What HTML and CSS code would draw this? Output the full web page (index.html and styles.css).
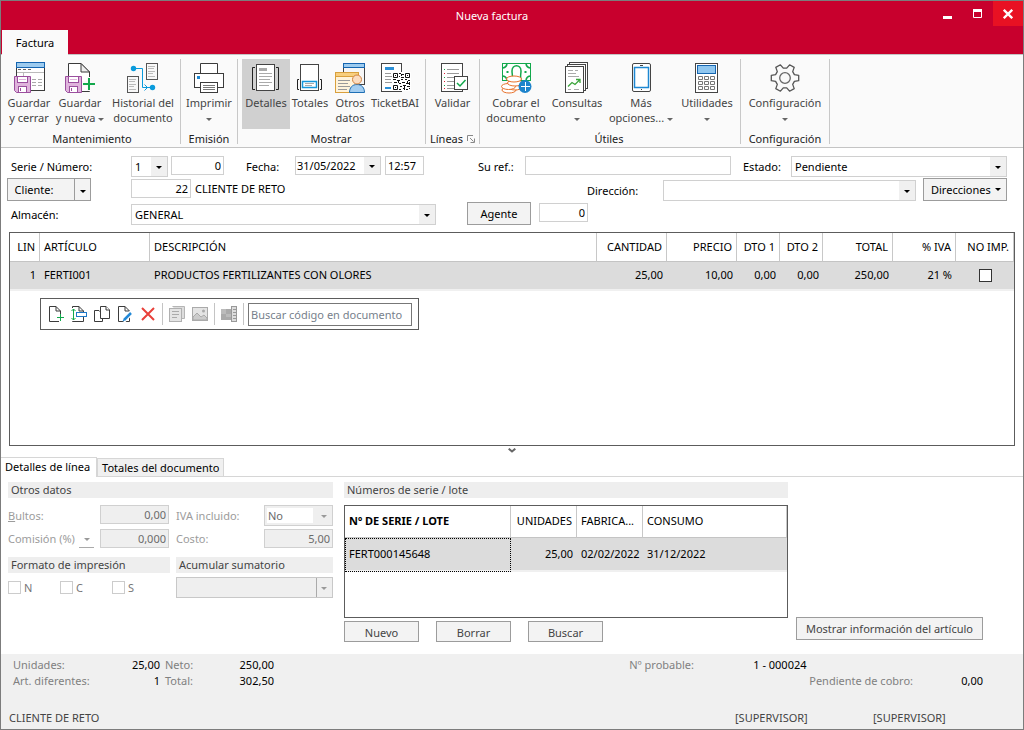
FILE: index.html
```html
<!DOCTYPE html>
<html lang="es">
<head>
<meta charset="utf-8">
<title>Nueva factura</title>
<link rel="stylesheet" href="styles.css">
</head>
<body>
<svg class="defs" aria-hidden="true">
  <defs>
    <g id="floppy">
      <path d="M1.500 14.500H17.500V30.500H3.500L1.500 28.500Z" fill="#dfb4dc" stroke="#9b4f9e"/>
      <rect x="4.500" y="14.500" width="10" height="6" fill="#fff" stroke="#9b4f9e"/>
      <path d="M6 17.500H13" stroke="#dfb4dc"/>
      <rect x="5.500" y="24.500" width="8" height="6" fill="#fff" stroke="#9b4f9e"/>
      <path d="M7.500 26V29" stroke="#9b4f9e"/>
    </g>
    <g id="sheet">
      <path d="M1.500 .5H8L12.500 5V15.500H1.500Z" fill="#fff" stroke="#3b3b3b"/>
      <path d="M8 .5V5H12.500" fill="none" stroke="#3b3b3b"/>
    </g>
  </defs>
</svg>
<div class="window">
  <header class="titlebar">
    <h1 class="title">Nueva factura</h1>
    <div class="caption">
      <button class="cap" aria-label="Minimizar"><svg width="10" height="10" viewBox="0 0 10 10"><path d="M0 8.500H9" stroke="#fff" stroke-width="3"/></svg></button>
      <button class="cap" aria-label="Maximizar"><svg width="10" height="10" viewBox="0 0 10 10"><path d="M.5 .5H8.500V8.500H.5ZM0 2H9" fill="none" stroke="#fff"/><path d="M0 1.500H9" stroke="#fff" stroke-width="3"/></svg></button>
      <button class="cap close" aria-label="Cerrar"><svg width="10" height="10" viewBox="0 0 10 10"><path d="M.8 .8L9.200 9.200M9.200 .8L.8 9.200" stroke="#fff" stroke-width="2.300"/></svg></button>
    </div>
  </header>
  <nav class="ribbon-tabs"><button class="ribbon-tab">Factura</button></nav>

  <div class="ribbon">
    <section class="group">
      <div class="tools">
        <button class="tool w50">
          <svg class="ico" viewBox="0 0 32 32"><rect x="3.500" y=".5" width="28" height="28" fill="#fff" stroke="#3b3b3b"/><rect x="3.500" y=".5" width="28" height="5" fill="#9dcbef" stroke="#1565b0"/><path d="M5 7.500H8M10 7.500H13M15 7.500H18" stroke="#666"/><path d="M4 10.500H31M10.500 10V14" stroke="#bbb"/><path d="M19 17.500H23M25 17.500H29M19 20.500H23M25 20.500H29M19 23.500H23M25 23.500H29" stroke="#aaa"/><use href="#floppy"/></svg>
          <span>Guardar<br>y cerrar</span></button>
        <button class="tool w52">
          <svg class="ico" viewBox="0 0 32 32"><path d="M4.500 1.500H17L25.500 10V29.500H4.500Z" fill="#fff" stroke="#3b3b3b"/><path d="M17 1.500V10H25.500Z" fill="#eee" stroke="#3b3b3b"/><use href="#floppy"/><path d="M25.500 15V29M18 21.500H32" stroke="#fafafa" stroke-width="5"/><path d="M25 16V28M19 22H31" stroke="#12a84c" stroke-width="2"/></svg>
          <span>Guardar<br>y nueva <i class="arr"></i></span></button>
        <button class="tool w74">
          <svg class="ico" viewBox="0 0 32 32"><rect x="19.500" y="1.500" width="11" height="16" fill="#f8f8f8" stroke="#555"/><path d="M21 4.500H28M21 6.500H27M21 9.500H28M21 11.500H26M21 14.500H28" stroke="#bbb"/><rect x=".5" y="14.500" width="11" height="16" fill="#f8f8f8" stroke="#555"/><path d="M2 17.500H9M2 19.500H8M2 22.500H9M2 24.500H7M2 27.500H9" stroke="#bbb"/><path d="M6 6.500H15.500V25.500H25M17.500 22.500L20.500 25.500L17.500 28.500" fill="none" stroke="#0a9bdc"/><circle cx="6.500" cy="6.500" r="2.700" fill="#0a9bdc"/><circle cx="25.500" cy="25.500" r="2.700" fill="#0a9bdc"/></svg>
          <span>Historial del<br>documento</span></button>
      </div>
      <h2 class="group-name">Mantenimiento</h2>
    </section>
    <section class="group">
      <div class="tools">
        <button class="tool w56">
          <svg class="ico" viewBox="0 0 32 32"><g fill="#fff" stroke="#3b3b3b"><path d="M7.500 11V1.500H24.500V11"/><rect x="1.500" y="11.500" width="29" height="14"/><rect x="7.500" y="20.500" width="17" height="10"/></g><rect x="4" y="14" width="3" height="3" fill="#1e88d2"/><path d="M10 23.500H22M10 25.500H22M10 27.500H22" stroke="#777"/></svg>
          <span>Imprimir<br><i class="arr"></i></span></button>
      </div>
      <h2 class="group-name">Emisión</h2>
    </section>
    <section class="group wide">
      <div class="tools">
        <button class="tool w48 on">
          <svg class="ico" viewBox="0 0 32 32"><path d="M5 5.500H2.500V27.500H5M26 5.500H28.500V27.500H26" fill="none" stroke="#222"/><rect x="6.500" y="2.500" width="18" height="26" fill="#fff" stroke="#444"/><rect x="9" y="6" width="8" height="3" fill="#aaa"/><path d="M9 11.500H22M9 14.500H22M9 17.500H20M9 20.500H22M9 23.500H19" stroke="#aaa"/></svg>
          <span>Detalles</span></button>
        <button class="tool w40">
          <svg class="ico" viewBox="0 0 32 32"><path d="M5 17.500H3.500V27.500H5M26 17.500H27.500V27.500H26" fill="none" stroke="#222"/><rect x="6.500" y="2.500" width="18" height="26" fill="#fff" stroke="#444"/><rect x="8.500" y="19.500" width="14" height="6" fill="#fff" stroke="#1597dc" stroke-width="1.500"/><path d="M11 21.500H20M11 23.500H18" stroke="#aaa"/></svg>
          <span>Totales</span></button>
        <button class="tool w40">
          <svg class="ico" viewBox="0 0 32 32"><rect x="9.500" y="1.500" width="21" height="21" fill="#f6f6f6" stroke="#444"/><rect x="9.500" y="1.500" width="21" height="4" fill="#9dcbef" stroke="#1565b0"/><rect x="1.500" y="10.500" width="23" height="20" fill="#fff3da" stroke="#d9a03c"/><rect x="1.500" y="10.500" width="23" height="4" fill="#f8cf7e" stroke="#d9a03c"/><path d="M4 18.500H16M4 21.500H14M4 24.500H16M4 27.500H13" stroke="#999"/><path d="M15.500 30.500C15.500 26 18 22.500 23 22.500S30.500 26 30.500 30.500Z" fill="#a3cdf0" stroke="#1e6fb5"/><circle cx="23" cy="17.500" r="4.500" fill="#fbdcbf" stroke="#cf8240"/></svg>
          <span>Otros<br>datos</span></button>
        <button class="tool w50">
          <svg class="ico" viewBox="0 0 32 32"><rect x="2.500" y="1.500" width="20" height="28" fill="#fff" stroke="#444"/><rect x="6" y="5" width="9" height="3" fill="#2b8fd6"/><path d="M6 11.500H12M6 14.500H13M6 17.500H12M6 20.500H13" stroke="#999"/><path d="M6 26H12" stroke="#2b8fd6" stroke-width="2"/><rect x="13" y="10" width="19" height="19" fill="#fff"/><g fill="none" stroke="#111"><path d="M14.500 11.500H18.500V15.500H14.500ZM26.500 11.500H30.500V15.500H26.500ZM14.500 23.500H18.500V27.500H14.500Z"/><path d="M16 13.500H17M28 13.500H29M16 25.500H17M20 11.500H22M23 12.500H25M20 14.500H21M22 15.500H25M14 17.500H17M18 18.500H21M22 17.500H24M26 17.500H28M29 18.500H31M15 20.500H18M20 21.500H22M23 20.500H26M27 21.500H30M21 24.500H23M24 23.500H27M28 24.500H31M20 27.500H22M24 26.500H26M27 27.500H29M30 26.500H31M22.500 12V14M19.500 19V21M25.500 24V28M28.500 19V21M30.500 20V23"/></g></svg>
          <span>TicketBAI</span></button>
      </div>
      <h2 class="group-name">Mostrar</h2>
    </section>
    <section class="group">
      <div class="tools">
        <button class="tool w53">
          <svg class="ico" viewBox="0 0 32 32"><rect x="4.500" y="1.500" width="21" height="28" fill="#fff" stroke="#444"/><path d="M10 7.500H22M10 11.500H22M10 15.500H17M10 19.500H17M10 23.500H17M10 26.500H20" stroke="#999"/><path d="M7.500 7V8M7.500 15V16M7.500 23V24" stroke="#12a84c"/><path d="M7.500 11V12M7.500 19V20M7.500 26V27" stroke="#d23"/><rect x="17.500" y="14.500" width="13" height="13" fill="#fff" stroke="#444"/><path d="M20 21L23 24L28.500 18" fill="none" stroke="#12a84c" stroke-width="1.500"/></svg>
          <span>Validar</span></button>
      </div>
      <div class="group-foot"><h2 class="group-name">Líneas</h2><button class="launcher" aria-label="Opciones de líneas"><svg width="8" height="8" viewBox="0 0 8 8"><path d="M.5 6V.5H6M3 3L6.500 6.500M3.500 7.500H7.500V3.500" fill="none" stroke="#888"/></svg></button></div>
    </section>
    <section class="group pad2">
      <div class="tools">
        <button class="tool w68">
          <svg class="ico" viewBox="0 0 32 32"><rect x="2.500" y="1.500" width="28" height="17" fill="#fff" stroke="#12a84c"/><path d="M3 6A5 5 0 0 0 7 2M26 2A5 5 0 0 0 30 6M3 14A5 5 0 0 1 7 18M26 18A5 5 0 0 1 30 14M12 18C13 14 12 12 12 9C12 2 21 2 21 9C21 12 20 14 21 18" fill="none" stroke="#12a84c" stroke-width="1.500"/><path d="M7.500 9V11M25.500 9V11" stroke="#12a84c" stroke-width="2"/><g fill="#fff" stroke="#e8722c"><ellipse cx="9" cy="28" rx="7" ry="3"/><ellipse cx="15" cy="25" rx="7" ry="3"/><ellipse cx="8.500" cy="24.500" rx="7" ry="3"/><ellipse cx="15" cy="21" rx="7.500" ry="3"/><ellipse cx="14" cy="17" rx="7.500" ry="3"/></g><circle cx="25" cy="24.500" r="6.500" fill="#1e84cc"/><path d="M25.500 20V29M21 24.500H30" stroke="#fff"/></svg>
          <span>Cobrar el<br>documento</span></button>
        <button class="tool w54">
          <svg class="ico" viewBox="0 0 32 32"><g fill="#fff" stroke="#444"><rect x="8.500" y=".5" width="18" height="26"/><rect x="6.500" y="2.500" width="18" height="26"/><rect x="4.500" y="4.500" width="18" height="26"/></g><path d="M7 8.500H12M14 8.500H17M7 11.500H15M7 14.500H18M7 27.500H10M13 27.500H18" stroke="#aaa"/><path d="M7 24.500L11 20.500L14 22.500L18.500 18M15 17.500H19V21" fill="none" stroke="#3ba53b" stroke-width="1.300"/></svg>
          <span>Consultas<br><i class="arr"></i></span></button>
        <button class="tool w74">
          <svg class="ico" viewBox="0 0 32 32"><rect x="7.500" y="1.500" width="18" height="28" rx="1.500" fill="#fff" stroke="#444"/><rect x="9.500" y="5.500" width="14" height="20" fill="#fff" stroke="#1e88d2" stroke-width="1.500"/><path d="M15 3.500H18M16 27.500H17" stroke="#444"/></svg>
          <span>Más<br>opciones... <i class="arr"></i></span></button>
        <button class="tool w58">
          <svg class="ico" viewBox="0 0 32 32"><rect x="4.500" y="1.500" width="22" height="29" fill="#fff" stroke="#444"/><rect x="6.500" y="3.500" width="18" height="8" fill="#8fc6ef" stroke="#1565b0"/><path d="M7.500 14.500h4v3h-4zM13.500 14.500h4v3h-4zM19.500 14.500h4v3h-4zM7.500 19.500h4v3h-4zM13.500 19.500h4v3h-4zM19.500 19.500h4v3h-4zM7.500 24.500h4v3h-4zM13.500 24.500h4v3h-4zM19.500 24.500h4v3h-4z" fill="#fff" stroke="#777"/></svg>
          <span>Utilidades<br><i class="arr"></i></span></button>
      </div>
      <h2 class="group-name">Útiles</h2>
    </section>
    <section class="group">
      <div class="tools">
        <button class="tool w88">
          <svg class="ico" viewBox="0 0 32 32"><path d="M25.400 12.600L29.700 13.300V18.700L25.400 19.400L23.700 22.400L25.200 26.600L20.600 29.200L17.700 25.800H14.300L11.400 29.200L6.800 26.600L8.300 22.400L6.600 19.400L2.300 18.700V13.300L6.600 12.600L8.300 9.600L6.800 5.400L11.400 2.800L14.300 6.200H17.700L20.600 2.800L25.200 5.400L23.700 9.600Z" fill="#fafafa" stroke="#555" stroke-width="1.300" stroke-linejoin="round"/><circle cx="16" cy="16" r="5.300" fill="#fafafa" stroke="#666" stroke-width="1.300"/></svg>
          <span>Configuración<br><i class="arr"></i></span></button>
      </div>
      <h2 class="group-name">Configuración</h2>
    </section>
  </div>

  <main class="body">
    <form class="head-form">
      <div class="frow">
        <label class="lbl w120" for="serie">Serie / Número:</label>
        <div class="combo w37"><select id="serie"><option>1</option></select></div>
        <input class="box w53 num gap3" aria-label="Número" value="0">
        <label class="lbl w49 gap22" for="fecha">Fecha:</label>
        <div class="combo w86 short"><select id="fecha"><option>31/05/2022</option></select></div>
        <input class="box w39 gap4" aria-label="Hora" value="12:57">
        <label class="lbl w47 gap54" for="ref">Su ref.:</label>
        <input class="box w206" id="ref">
        <label class="lbl w48 gap12" for="estado">Estado:</label>
        <div class="combo grow"><select id="estado"><option>Pendiente</option></select></div>
      </div>
      <div class="frow tall">
        <div class="split"><button type="button" class="btn main">Cliente:</button><button type="button" class="btn drop" aria-label="Más opciones de cliente"><i class="arr dark"></i></button></div>
        <input class="box w60 num" aria-label="Cliente" value="22">
        <span class="client grow">CLIENTE DE RETO</span>
        <label class="lbl w76" for="dir">Dirección:</label>
        <div class="combo w253"><select id="dir"><option></option></select></div>
        <button type="button" class="btn w84 gap7 dirs">Direcciones<i class="arr dark"></i></button>
      </div>
      <div class="frow tall">
        <label class="lbl w120" for="almacen">Almacén:</label>
        <div class="combo w305"><select id="almacen"><option>GENERAL</option></select></div>
        <button type="button" class="btn w64 gap31">Agente</button>
        <input class="box w49 num gap8" aria-label="Agente" value="0">
      </div>
    </form>

    <div class="lines">
      <table class="grid">
        <colgroup><col class="w30"><col class="w110"><col><col class="w70"><col class="w70"><col class="w43"><col class="w43"><col class="w70"><col class="w63"><col class="w58"></colgroup>
        <thead><tr><th class="r">LIN</th><th>ARTÍCULO</th><th>DESCRIPCIÓN</th><th class="r">CANTIDAD</th><th class="r">PRECIO</th><th class="r">DTO 1</th><th class="r">DTO 2</th><th class="r">TOTAL</th><th class="r">% IVA</th><th class="r">NO IMP.</th></tr></thead>
        <tbody><tr><td class="r">1</td><td>FERTI001</td><td>PRODUCTOS FERTILIZANTES CON OLORES</td><td class="r">25,00</td><td class="r">10,00</td><td class="r">0,00</td><td class="r">0,00</td><td class="r">250,00</td><td class="r">21 %</td><td class="c"><input type="checkbox" class="tick strong" aria-label="No imprimir"></td></tr></tbody>
      </table>
      <div class="minibar">
        <button class="mini" aria-label="Nueva línea"><svg viewBox="0 0 16 16"><use href="#sheet"/><path d="M8 11.500H16M12.500 8V16" stroke="#fff" stroke-width="3"/><path d="M9 11.500H16M12.500 8V15" stroke="#12a84c"/></svg></button>
        <button class="mini" aria-label="Insertar línea"><svg viewBox="0 0 16 16"><use href="#sheet"/><path d="M2.500 2V15" stroke="#fff" stroke-width="4"/><path d="M2.500 3V14M.5 5L2.500 3L4.500 5M.5 12L2.500 14L4.500 12" fill="none" stroke="#12a84c"/><rect x="5.500" y="6.500" width="10" height="4" fill="#fff" stroke="#1e78c8"/></svg></button>
        <button class="mini" aria-label="Duplicar línea"><svg viewBox="0 0 16 16"><g fill="#fff" stroke="#3b3b3b"><path d="M.5 4.500H5L8.500 8V15.500H.5Z"/><path d="M6.500 .5H12L15.500 4V12.500H6.500Z"/><path d="M12 .5V4H15.500"/></g></svg></button>
        <button class="mini" aria-label="Editar línea"><svg viewBox="0 0 16 16"><use href="#sheet"/><path d="M6 15L15 6" stroke="#fff" stroke-width="5"/><path d="M7.500 13.500L14 7" stroke="#2389d7" stroke-width="2.500"/><path d="M5.500 15.500L7 12L9 14Z" fill="#2389d7"/></svg></button>
        <button class="mini" aria-label="Eliminar línea"><svg viewBox="0 0 16 16"><path d="M2 2L14 14M14 2L2 14" stroke="#e8403a" stroke-width="2"/></svg></button>
        <span class="sep"></span>
        <button class="mini" aria-label="Documentos" disabled><svg viewBox="0 0 16 16"><path d="M3.500 .5H15.500V12.500H13" fill="#ddd" stroke="#b5b5b5"/><rect x=".5" y="2.500" width="12" height="13" fill="#e4e4e4" stroke="#b0b0b0"/><path d="M3 5.500H10M3 8.500H10M3 11.500H8" stroke="#aaa"/></svg></button>
        <button class="mini" aria-label="Imagen" disabled><svg viewBox="0 0 16 16"><rect x=".5" y="1.500" width="15" height="13" fill="#e4e4e4" stroke="#aaa"/><path d="M1 11L5 7L9 11L12 9L15 12V14H1Z" fill="#ccc" stroke="#aaa"/><circle cx="11.500" cy="5" r="1.500" fill="#aaa"/></svg></button>
        <span class="sep"></span>
        <button class="mini" aria-label="Tallas" disabled><svg viewBox="0 0 16 16"><path d="M0 3H10V14H0Z" fill="#aaa"/><path d="M0 3H5V8H0ZM5 8H10V11H5Z" fill="#bbb"/><rect x="10.500" y=".5" width="5" height="15" fill="#ddd" stroke="#999"/><path d="M12 3.500H15M12 6.500H15M12 9.500H15M12 12.500H15" stroke="#999"/></svg></button>
        <span class="sep"></span>
        <input class="search" aria-label="Buscar código en documento" placeholder="Buscar código en documento">
      </div>
    </div>

    <button class="collapse" aria-label="Contraer panel"><svg width="8" height="5" viewBox="0 0 8 5"><path d="M.7 .7L4 3.500L7.300 .7" fill="none" stroke="#666" stroke-width="2"/></svg></button>

    <nav class="tabs"><button class="tab active">Detalles de línea</button><button class="tab">Totales del documento</button></nav>

    <div class="panel">
      <section class="left">
        <h3 class="bar">Otros datos</h3>
        <div class="pair first">
          <label class="off" for="bultos"><u>B</u>ultos:</label>
          <input class="box num dis" id="bultos" value="0,00" disabled>
          <label class="off" for="iva">IVA incluido:</label>
          <div class="combo dis"><select id="iva" disabled><option>No</option></select></div>
        </div>
        <div class="pair">
          <div class="com"><label class="off" for="comision">Comisión (%)</label><button class="unit" aria-label="Tipo de comisión" disabled><i class="arr"></i></button></div>
          <input class="box num dis" id="comision" value="0,000" disabled>
          <label class="off" for="costo">Costo:</label>
          <input class="box num dis" id="costo" value="5,00" disabled>
        </div>
        <div class="halves">
          <div>
            <h3 class="bar">Formato de impresión</h3>
            <div class="checks"><label><input type="checkbox" class="tick" disabled>N</label><label><input type="checkbox" class="tick" disabled>C</label><label><input type="checkbox" class="tick" disabled>S</label></div>
          </div>
          <div>
            <h3 class="bar">Acumular sumatorio</h3>
            <div class="combo dis sum"><select aria-label="Acumular sumatorio" disabled><option></option></select></div>
          </div>
        </div>
      </section>
      <section class="mid">
        <h3 class="bar">Números de serie / lote</h3>
        <div class="lots">
          <table class="grid lot">
            <colgroup><col class="w166"><col class="w66"><col class="w66"><col></colgroup>
            <thead><tr><th class="b">Nº DE SERIE / LOTE</th><th class="r">UNIDADES</th><th>FABRICA...</th><th>CONSUMO</th></tr></thead>
            <tbody><tr><td class="focus">FERT000145648</td><td class="r">25,00</td><td>02/02/2022</td><td>31/12/2022</td></tr></tbody>
          </table>
        </div>
        <div class="actions"><button class="btn grey">Nuevo</button><button class="btn grey">Borrar</button><button class="btn grey">Buscar</button></div>
      </section>
      <button class="btn grey info">Mostrar información del artículo</button>
    </div>
  </main>

  <footer class="status">
    <div class="sums">
      <dl class="totals">
        <dt>Unidades:</dt><dd>25,00</dd><dt>Neto:</dt><dd>250,00</dd>
        <dt>Art. diferentes:</dt><dd>1</dd><dt>Total:</dt><dd>302,50</dd>
      </dl>
      <dl class="due">
        <dt>Nº probable:</dt><dd class="number">1 - 000024</dd>
        <dt class="pending">Pendiente de cobro:</dt><dd class="amount">0,00</dd>
      </dl>
    </div>
    <div class="users"><span class="grow">CLIENTE DE RETO</span><span class="user">[SUPERVISOR]</span><span class="user">[SUPERVISOR]</span></div>
  </footer>
</div>
</body>
</html>
```

FILE: styles.css
```css
* { box-sizing: border-box; }
body { margin: 0; font: 11px/15px "Noto Sans", "Open Sans", sans-serif; color: #000; background: #fff; }
button, input, select { font: inherit; color: inherit; margin: 0; padding: 0; border-radius: 0; }
button { border: 0; background: none; white-space: nowrap; }
h1, h2, h3, dl, dd { margin: 0; font: inherit; }
svg { display: block; }
.defs { position: absolute; width: 0; height: 0; }

.window { display: flex; flex-direction: column; min-height: 100vh; border: 1px solid #7c7c7c; }

.titlebar { display: grid; grid-template-columns: 1fr auto 1fr; height: 29px; background: #c8002d; color: #fff; }
.title { grid-column: 2; line-height: 29px; margin-right: 40px; }
.caption { display: flex; justify-content: flex-end; }
.cap { display: flex; justify-content: center; align-items: center; width: 30px; height: 25px; }
.close { background: #e81123; }

.ribbon-tabs { display: flex; height: 24px; padding-left: 1px; background: #c8002d; }
.ribbon-tab { width: 66px; height: 25px; background: #fafafa; position: relative; z-index: 1; }
.ribbon { display: flex; border-top: 1px solid #c4c4c4; border-bottom: 1px solid #c4c4c4; background: #fafafa; padding: 4px 0 3px 3px; }
.group { display: flex; flex-direction: column; height: 85px; border-right: 1px solid #c8c8c8; }
.group.wide { padding: 0 5px 0 4px; }
.group.pad2 { padding: 0 4px 0 2px; }
.tools { display: flex; height: 73px; flex: none; }
.tool { display: flex; flex-direction: column; align-items: center; gap: 1px; padding-top: 3px; height: 70px; color: #444; }
.tool.on { background: #d0d0d0; }
.ico { width: 32px; height: 32px; flex: none; }
.group-name { text-align: center; line-height: 14px; color: #222; }
.group-foot { display: flex; justify-content: space-between; align-items: center; padding: 0 4px; }
.arr { display: inline-block; vertical-align: middle; border: 3px solid transparent; border-top-color: #666; border-bottom: 0; }
.arr.dark { border-top-color: #000; }

.body { display: flex; flex-direction: column; flex: 1; }
.head-form { padding: 8px 16px 0 10px; }
.frow { display: flex; align-items: flex-start; height: 23px; }
.frow.tall { height: 24px; }
.lbl { padding-top: 3px; flex: none; white-space: nowrap; }
.box { height: 19px; border: 1px solid #d0d0d0; background: #fff; padding: 0 2px; min-width: 0; flex: none; }
.num { text-align: right; }
.combo { position: relative; height: 21px; border: 1px solid #d0d0d0; background: #fff; flex: none; }
.combo.short { height: 19px; }
.combo select { appearance: none; display: block; width: 100%; height: 100%; border: 0; background: linear-gradient(#f0f0f0, #f0f0f0) right / 16px 100% no-repeat; padding: 0 16px 0 3px; opacity: 1; }
.combo.short select { padding-left: 1px; }
.combo::after { content: ""; position: absolute; right: 5px; top: 50%; margin-top: -1px; border: 3px solid transparent; border-top-color: #000; border-bottom: 0; pointer-events: none; }
.grow, .combo.grow { flex: 1; }
.btn { border: 1px solid #9c9c9c; background: #f3f3f3; height: 23px; flex: none; }
.split { display: flex; width: 84px; margin: -1px 40px 0 -4px; }
.split .main { width: 68px; padding-right: 14px; }
.split .drop { width: 17px; margin-left: -1px; }
.tall .combo { margin-top: 1px; }
.tall .lbl { padding-top: 4px; }
.tall .btn { margin-top: -1px; }
.tall .split .btn { margin-top: 0; }
.dirs { display: flex; align-items: center; justify-content: space-between; padding: 0 5px 0 7px; }
.client { padding: 2px 0 0 4px; }

.lines { flex: 1; min-height: 160px; margin: 5px 8px 0 8px; border: 1px solid #5c5c5c; }
.grid { width: 100%; table-layout: fixed; border-collapse: separate; border-spacing: 0; }
.grid th, .grid td { padding: 0 4px 2px; text-align: left; white-space: nowrap; font-weight: 400; overflow: hidden; }
.grid th { height: 29px; border-right: 1px solid #c8c8c8; border-bottom: 1px solid #c4c4c4; }
.grid td { height: 29px; background: #dcdcdc; border-bottom: 2px solid #f0f0f0; }
.grid .r { text-align: right; }
.grid .c { text-align: center; }
.grid th.b { font-weight: 700; }
.tick { appearance: none; width: 13px; height: 13px; border: 1px solid #ccc; background: #fff; vertical-align: middle; }
.tick.strong { border-color: #333; }
.minibar { display: flex; align-items: center; gap: 7px; width: 379px; height: 32px; margin: 7px 0 0 30px; padding: 0 6px 0 7px; border: 1px solid #5c5c5c; }
.mini, .mini svg { width: 16px; height: 16px; flex: none; }
.sep { width: 1px; height: 22px; background: #c4c4c4; margin: 0 -1px; }
.search { flex: 1; min-width: 0; height: 23px; border: 1px solid #777; padding: 0 2px; margin-left: -2px; }
.search::placeholder { color: #777f8c; opacity: 1; }
.collapse { align-self: center; padding: 2px 0 4px; }

.tabs { display: flex; align-items: flex-end; height: 20px; border-bottom: 1px solid #d6d6d6; }
.tab { height: 18px; padding: 0 4px; border: 1px solid #d6d6d6; border-bottom: 0; background: #f0f0f0; }
.tab.active { height: 20px; margin-bottom: -1px; padding: 0 6px 3px 4px; border-left: 0; background: #fff; }

.panel { display: flex; padding: 5px 8px 12px 7px; color: #444; }
.bar { height: 16px; line-height: 16px; padding-left: 3px; background: #eee; }
.left { width: 325px; }
.pair { display: grid; grid-template-columns: 92px 69px 95px 69px; height: 21px; margin-bottom: 3px; align-items: start; }
.pair label:nth-child(3) { padding-left: 7px; }
.pair.first { margin-top: 7px; }
.off { padding-top: 3px; color: #9c9c9c; white-space: nowrap; }
.pair:not(.first) .off { padding-top: 2px; }
.com { display: flex; justify-content: space-between; padding-right: 6px; }
.unit { width: 15px; height: 19px; border-bottom: 1px solid #aaa; }
.unit .arr { border-top-color: #999; }
.dis { background: #efefef; color: #6b6b6b; }
.combo.dis::after { border-top-color: #999; }
#iva { background: linear-gradient(#fff, #fff) 2px 2px / 46px 15px no-repeat; }
.halves { display: grid; grid-template-columns: 162px 157px; column-gap: 6px; padding-top: 4px; }
.checks { display: flex; padding-top: 7px; color: #777; }
.checks label { display: flex; align-items: center; gap: 3px; width: 52px; }
.sum { margin-top: 4px; border-color: #c8c8c8; }
.sum select { background: linear-gradient(#aaa, #aaa) right 15px top / 1px 100% no-repeat; }
.mid { width: 444px; margin-left: 11px; }
.lots { height: 113px; margin-top: 7px; border: 1px solid #5c5c5c; color: #000; }
.lot th { height: 32px; }
.lot td { height: 34px; }
.lot .focus { outline: 1px dotted #000; outline-offset: -1px; }
.actions { display: flex; gap: 17px; margin-top: 3px; }
.actions .btn { width: 75px; height: 21px; padding-top: 1px; }
.grey { color: #444; }
.info { width: 187px; align-self: flex-end; margin: 0 0 2px 8px; }

.status { display: flex; flex-direction: column; justify-content: space-between; height: 75px; padding: 3px 8px 4px; background: #f0f0f0; color: #444; }
.sums { display: flex; justify-content: space-between; padding: 0 32px 0 4px; line-height: 16px; }
.totals { display: grid; grid-template-columns: 90px 57px 41px 73px; }
.totals dt:nth-of-type(even) { padding-left: 5px; }
.due { display: grid; grid-template-columns: 124px 56px auto 70px; }
.status dt { color: #808080; }
.status dd { color: #000; text-align: right; }
.due .number { grid-column: 2 / 5; text-align: left; }
.due .pending { grid-column: 2 / 4; margin-left: 56px; }
.users { display: flex; padding-right: 4px; }
.user { width: 138px; }

.w30 { width: 30px; } .w37 { width: 37px; } .w39 { width: 39px; } .w40 { width: 40px; }
.w43 { width: 43px; } .w47 { width: 47px; } .w48 { width: 48px; } .w49 { width: 49px; }
.w50 { width: 50px; } .w52 { width: 52px; } .w53 { width: 53px; } .w54 { width: 54px; }
.w56 { width: 56px; } .w58 { width: 58px; } .w60 { width: 60px; } .w63 { width: 63px; }
.w64 { width: 64px; } .w66 { width: 66px; } .w68 { width: 68px; } .w70 { width: 70px; }
.w74 { width: 74px; } .w76 { width: 76px; } .w84 { width: 84px; } .w86 { width: 86px; }
.w88 { width: 88px; } .w110 { width: 110px; } .w120 { width: 120px; } .w166 { width: 166px; }
.w206 { width: 206px; } .w253 { width: 253px; } .w305 { width: 305px; }
.gap3 { margin-left: 3px; } .gap4 { margin-left: 4px; } .gap7 { margin-left: 7px; } .gap8 { margin-left: 8px; }
.gap12 { margin-left: 12px; } .gap22 { margin-left: 22px; } .gap31 { margin-left: 31px; } .gap54 { margin-left: 54px; }
```
